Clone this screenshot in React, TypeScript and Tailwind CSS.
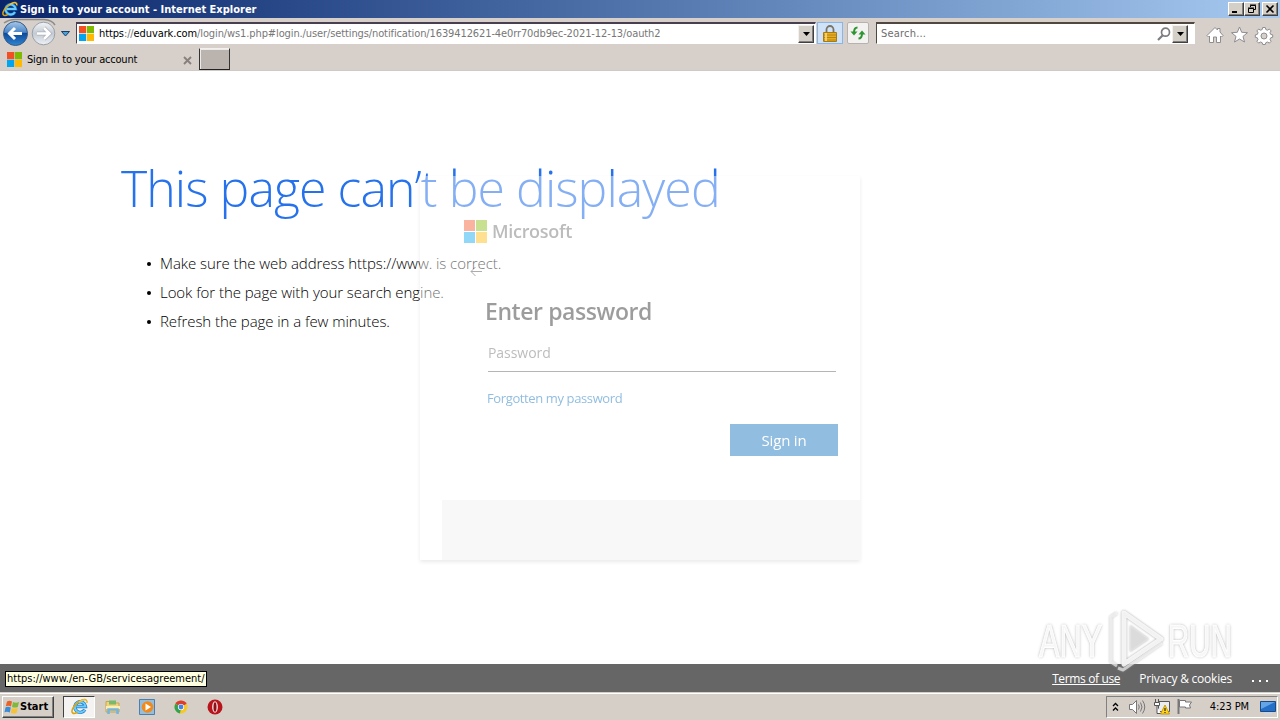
import type { ReactNode } from "react";

const WindowsLogo = ({ size }: { size: number }) => (
  <svg width={size} height={size} viewBox="0 0 23 23" className="shrink-0">
    <path fill="#f25022" d="M0 0h11v11H0z" />
    <path fill="#7fba00" d="M12 0h11v11H12z" />
    <path fill="#00a4ef" d="M0 12h11v11H0z" />
    <path fill="#ffb900" d="M12 12h11v11H12z" />
  </svg>
);

const IeLogo = ({ size }: { size: number }) => (
  <svg width={size} height={size} viewBox="0 0 16 16" className="shrink-0" fill="none">
    <path d="M13 11a5 5 0 1 1 .6-3H5" stroke="#1677c8" strokeWidth="3.2" />
    <path d="M13 11a5 5 0 1 1 .6-3H5" stroke="#6ccbf8" strokeWidth="1.9" />
    <path d="M14.8 4.500C15.500 1 12 .5 7.500 3.500 3 6.500-.5 12 1.500 14c1 1 3 .4 4.500-.6" stroke="#d9a514" strokeWidth="1.500" />
    <path d="M14.500 4C14.800 1.300 12 .8 7.500 3.800" stroke="#ffe36b" strokeWidth=".7" />
  </svg>
);

const Caret = () => (
  <svg width="7" height="4" viewBox="0 0 7 4">
    <path d="M0 0h7L3.500 4z" fill="#000" />
  </svg>
);

const DropButton = () => (
  <div className="flex h-[18px] w-4 items-center justify-center border border-t-[#f4f1ec] border-r-[#404040] border-b-[#404040] border-l-[#f4f1ec] bg-[#d4d0c8] shadow-[inset_-1px_-1px_#808080]">
    <Caret />
  </div>
);

const WinButton = ({ children }: { children: ReactNode }) => (
  <div className="flex h-[14px] w-4 items-center justify-center border border-t-white border-r-[#404040] border-b-[#404040] border-l-white bg-[#d4d0c8] shadow-[inset_-1px_-1px_#808080]">
    <svg width="12" height="10" viewBox="0 0 12 10" fill="none" stroke="#000">
      {children}
    </svg>
  </div>
);

const TitleBar = () => (
  <div className="flex h-[18px] items-center bg-linear-to-r from-[#0a246a] to-[#a6caf0] pr-[2px] pl-[2px]">
    <IeLogo size={16} />
    <span className="ml-[2px] pt-[2px] font-['DejaVu_Sans_Condensed','DejaVu_Sans',sans-serif] text-[11px] font-bold whitespace-nowrap text-white">
      Sign in to your account - Internet Explorer
    </span>
    <div className="ml-auto flex">
      <WinButton>
        <path d="M2 8h5" strokeWidth="2" />
      </WinButton>
      <WinButton>
        <path d="M4.500 3V1.500h5v4H8M4 1h6M2.500 4.500h5v4h-5zM2 4h6" />
      </WinButton>
      <div className="ml-[2px]">
        <WinButton>
          <path d="M2.500 1.500l7 7M9.500 1.500l-7 7" strokeWidth="1.600" />
        </WinButton>
      </div>
    </div>
  </div>
);

const NavButtons = () => (
  <svg width="76" height="30" viewBox="0 0 76 30" className="shrink-0">
    <defs>
      <linearGradient id="back" x1="0" y1="0" x2="0" y2="1">
        <stop offset="0" stopColor="#a9c8e8" />
        <stop offset=".45" stopColor="#4a86c8" />
        <stop offset=".5" stopColor="#0d4a9c" />
        <stop offset="1" stopColor="#2f86d0" />
      </linearGradient>
      <linearGradient id="fwd" x1="0" y1="0" x2="0" y2="1">
        <stop offset="0" stopColor="#f3f5f7" />
        <stop offset=".5" stopColor="#c3cad3" />
        <stop offset="1" stopColor="#eef2f6" />
      </linearGradient>
    </defs>
    <path d="M4 5Q9 1.500 15 1.500h29Q52 2 55 7" fill="none" stroke="#8e8c8a" strokeWidth="1.500" />
    <circle cx="15.500" cy="15.500" r="12" fill="url(#back)" stroke="#375a86" />
    <circle cx="43.500" cy="15.500" r="11.300" fill="url(#fwd)" stroke="#98a0aa" />
    <path d="M22 15.500H10M15 10l-5.500 5.500L15 21" fill="none" stroke="#fff" strokeWidth="3" />
    <path d="M37 15.500h12M44 10l5.500 5.500L44 21" fill="none" stroke="#aab0b8" strokeWidth="4" />
    <path d="M37 15.500h12M44 10l5.500 5.500L44 21" fill="none" stroke="#fff" strokeWidth="2.600" />
    <path d="M61.500 13.500h8l-4 4.500z" fill="#4aa3d8" stroke="#173f6c" />
  </svg>
);

const AddressBar = () => (
  <div className="flex h-[30px] items-start bg-[#d6cfca]">
    <NavButtons />
    <div className="mt-[4px] flex h-[22px] w-[740px] shrink-0 items-center border border-t-2 border-t-[#484050] border-r-white border-b-white border-l-[#484050] bg-white pl-[2px]">
      <WindowsLogo size={15} />
      <span className="ml-[5px] pt-[2px] font-['DejaVu_Sans_Condensed','DejaVu_Sans',sans-serif] text-[11px] tracking-[-0.11px] whitespace-nowrap text-[#777]">
        <span className="text-black">https</span>://<span className="text-black">eduvark.com</span>
        /login/ws1.php#login./user/settings/notification/1639412621-4e0rr70db9ec-2021-12-13/oauth2
      </span>
      <div className="ml-auto pr-px">
        <DropButton />
      </div>
    </div>
    <div className="mt-[4px] ml-[1px] flex h-[22px] w-[26px] shrink-0 items-center justify-center border border-[#8ab6e6] bg-[#cfe2f8]">
      <svg width="14" height="17" viewBox="0 0 14 17">
        <path d="M3.500 8V4.500a3.500 3.500 0 0 1 7 0V8" fill="none" stroke="#7b7464" strokeWidth="1.800" />
        <path d="M.5 7.500h13v9H.5z" fill="#e8ad1e" stroke="#a87a10" />
        <path d="M1 10h12M1 12.500h12M1 15h12" stroke="#b88411" />
        <path d="M3 8v8" stroke="#fbe08a" strokeWidth="1.500" />
      </svg>
    </div>
    <div className="mt-[4px] ml-[4px] flex h-[22px] w-[22px] shrink-0 items-center justify-center rounded-[2px] border border-[#b5b2b0] bg-[#f3f2f1]">
      <svg width="16" height="14" viewBox="0 0 16 14" fill="none" stroke="#2d9632" strokeWidth="2">
        <path d="M7.500 1.500C5 1.500 4 3 4 6.500" />
        <path d="M.5 5.500h7L4 9.500z" fill="#2d9632" stroke="none" />
        <path d="M8.500 12.500c2.500 0 3.500-1.500 3.500-5" />
        <path d="M8.500 8.500h7L12 4.500z" fill="#2d9632" stroke="none" />
      </svg>
    </div>
    <div className="mt-[4px] ml-[7px] flex h-[22px] w-[319px] shrink-0 items-center border border-t-2 border-t-[#504840] border-r-white border-b-white border-l-[#504840] bg-white pr-[6px] pl-[4px]">
      <span className="pt-[2px] font-['DejaVu_Sans_Condensed','DejaVu_Sans',sans-serif] text-[11px] tracking-[0.2px] text-[#6d6d6d]">
        Search...
      </span>
      <svg width="14" height="14" viewBox="0 0 14 14" fill="none" stroke="#7b7b80" className="mr-px ml-auto">
        <circle cx="8.500" cy="5.200" r="4" strokeWidth="1.700" />
        <path d="M5.500 8.500L1 13" strokeWidth="2.200" />
      </svg>
      <DropButton />
    </div>
    <svg width="70" height="20" viewBox="0 0 70 20" className="mt-[7px] ml-[11px] shrink-0" fill="#fff" stroke="#8f8d90">
      <path d="M1 10.500L9 2.500l2.500 2.500V3.500h2.500V7l3 3.500-1.500 1.500-1-1V17.500h-4V12H7.500v5.500h-4V11l-1 1z" />
      <path d="M33.500 2l2.200 5.300 5.800.4-4.500 3.700 1.500 5.600-5-3-5 3 1.500-5.600-4.500-3.700 5.800-.4z" />
      <path d="M56.700 2.500h2.600l.5 2 1.700.7 1.800-1.100 1.800 1.800-1.100 1.800.7 1.700 2 .5v2.400l-2 .5-.7 1.700 1.100 1.800-1.800 1.800-1.800-1.100-1.700.7-.5 1.800h-2.600l-.5-1.800-1.700-.7-1.800 1.100-1.800-1.800L52 14.500l-.7-1.700-2-.5V9.900l2-.5.700-1.700-1.100-1.800 1.800-1.800 1.800 1.100 1.700-.7z" />
      <circle cx="58" cy="11" r="3" fill="#d6cfca" />
    </svg>
  </div>
);

const Tabs = () => (
  <div className="flex h-[23px] border-b border-[#d0c9c4] bg-[#d6cfca]">
    <div className="flex w-[199px] items-center pl-[7px]">
      <WindowsLogo size={15} />
      <span className="ml-[5px] pt-[3px] font-['DejaVu_Sans_Condensed','DejaVu_Sans',sans-serif] text-[11px] tracking-[-0.2px] whitespace-nowrap text-black">
        Sign in to your account
      </span>
      <svg width="9" height="9" viewBox="0 0 9 9" className="mt-[2px] mr-[7px] ml-auto" stroke="#88807c" strokeWidth="1.900">
        <path d="M1 1l7 7M8 1L1 8" />
      </svg>
    </div>
    <div className="h-[22px] w-[31px] border border-t-[#f3f0ee] border-r-[#333] border-b-[#222] border-l-[#333] bg-[#bab3ae] shadow-[inset_1px_1px_#eeeae7]" />
  </div>
);

const tips = [
  "Make sure the web address https://www. is correct.",
  "Look for the page with your search engine.",
  "Refresh the page in a few minutes.",
];

const ErrorMessage = () => (
  <div className="pt-[83px] pl-[121px] font-['Open_Sans',sans-serif] font-light">
    <h1 className="h-[68px] text-[50px] leading-[68px] tracking-[-0.94px] whitespace-nowrap text-[#2672ec]">
      This page can’t be displayed
    </h1>
    <ul className="mt-[27px] text-[15px] leading-[29px] tracking-[-0.06px] text-black">
      {tips.map((tip) => (
        <li key={tip} className="flex items-center pl-[26px]">
          <span className="mr-[9px] size-1 rounded-full bg-black" />
          <span className="whitespace-nowrap">{tip}</span>
        </li>
      ))}
    </ul>
  </div>
);

// Sign-in card fading in over the error page
const SignInCard = () => (
  <div className="absolute top-[105px] left-[420px] flex h-[384px] w-[440px] flex-col bg-white font-['Open_Sans',sans-serif] text-[#1b1b1b] opacity-[.43] shadow-[0_2px_4px_rgba(0,0,0,0.2)]">
    <div className="mt-[44px] ml-[44px] flex h-[23px] items-center">
      <WindowsLogo size={23} />
      <span className="ml-[5px] text-[18px] font-semibold tracking-[-0.3px] text-[#666]">Microsoft</span>
    </div>
    <svg width="12" height="12" viewBox="0 0 12 12" className="mt-[22px] ml-[50px] shrink-0" fill="none" stroke="#404040">
      <path d="M12 6.500H1M5.500 2L1 6.500 5.500 11" />
    </svg>
    <h2 className="mt-[17px] ml-[65px] text-[23px] leading-[34px] font-semibold tracking-[-0.42px]">Enter password</h2>
    <div className="mt-[7px] ml-[68px] h-[37px] w-[348px] border-b border-[#555] text-[14px] leading-[35px] tracking-[-0.05px] text-[#666]">
      Password
    </div>
    <a className="mt-[16px] ml-[67px] text-[13px] leading-[20px] tracking-[-0.38px] text-[#0067b8]">
      Forgotten my password
    </a>
    <button className="mt-[16px] ml-[310px] h-[32px] w-[108px] shrink-0 bg-[#0067b8] pt-px text-[15px] leading-[31px] tracking-[-0.2px] text-white">
      Sign in
    </button>
    <div className="mt-auto ml-[22px] h-[60px] bg-[#f0f0f0]" />
  </div>
);

const PageFooter = () => (
  <div className="flex h-[28px] items-center justify-between bg-[#666] pr-[11px] pl-[5px]">
    <div className="mt-[2px] h-[16px] w-[202px] border border-black bg-[#ffffe1] pl-px font-['DejaVu_Sans_Condensed','DejaVu_Sans',sans-serif] text-[11px] leading-[14px] whitespace-nowrap text-black">
      https://www./en-GB/servicesagreement/
    </div>
    <div className="flex items-center pt-[2px] font-['Open_Sans',sans-serif] text-[12px] text-white">
      <span className="tracking-[-0.36px] underline">Terms of use</span>
      <span className="ml-[19px] tracking-[-0.22px]">Privacy &amp; cookies</span>
      <svg width="18" height="4" viewBox="0 0 18 4" className="mt-[4px] ml-[19px]" fill="#fff">
        <path d="M1 1h2v2H1zM8 1h2v2H8zM15 1h2v2h-2z" />
      </svg>
    </div>
  </div>
);

const Watermark = () => (
  <div className="absolute top-[608px] left-[1039px] flex h-[66px] w-[200px] items-center font-['Liberation_Sans',sans-serif] text-[46px] leading-none font-normal text-white/90 [-webkit-text-stroke:1.2px_#fff] [text-shadow:0_0_2px_#aaa,0_0_4px_#bbb]">
    <span className="w-[67px] origin-left scale-x-[.67] whitespace-nowrap">ANY</span>
    <svg width="62" height="66" viewBox="0 0 62 66" fill="none" className="shrink-0 drop-shadow-[0_0_1px_#999]" strokeLinejoin="round">
      <path d="M18 5l37 26-37 25z" stroke="#fff" strokeOpacity=".85" strokeWidth="5" />
      <path d="M24 17l19 14-19 13z" fill="#e9e9e9" fillOpacity=".7" />
      <path d="M11 5L5 9v45l6 4M12 60l5 2 39-27" stroke="#fff" strokeOpacity=".6" strokeWidth="3" />
    </svg>
    <span className="origin-left scale-x-[.64] whitespace-nowrap">RUN</span>
  </div>
);

const Taskbar = () => (
  <div className="flex h-[28px] items-center border-t border-[#d4d0c8] bg-[#d6cfc8] pr-[2px] pl-[2px] shadow-[inset_0_1px_#fff]">
    <div className="flex h-[22px] w-[52px] items-center border border-t-white border-r-[#404040] border-b-[#404040] border-l-white pl-px shadow-[inset_-1px_-1px_#808080]">
      <svg width="16" height="16" viewBox="0 0 16 16" className="shrink-0">
        <path d="M3 2.500Q5.500 1 8 2.500L7 7.500Q4.500 6 1.800 7.200z" fill="#e8622a" />
        <path d="M9 3q3 1.400 6 0l-1.200 5Q11 9.200 8 8z" fill="#7fb83a" />
        <path d="M1.600 8.200Q4.200 7 6.800 8.500l-1 5Q3 12 .5 13.200z" fill="#3b8bd6" />
        <path d="M7.800 9q3 1.200 6 0l-1.300 5q-3 1.200-5.700-.2z" fill="#f6c334" />
      </svg>
      <span className="pt-[2px] font-['DejaVu_Sans_Condensed','DejaVu_Sans',sans-serif] text-[11px] font-bold text-black">
        Start
      </span>
    </div>
    <div className="ml-[9px] flex h-[22px] w-[32px] items-center justify-center border border-t-[#404040] border-r-white border-b-white border-l-[#404040] bg-[#f5f3f1]">
      <IeLogo size={17} />
    </div>
    <svg width="16" height="16" viewBox="0 0 16 16" className="ml-[10px]">
      <path d="M1 2.500h5l1 1.500h7v9H1z" fill="#efd27a" stroke="#c9a44a" />
      <path d="M4 1.500h7v4H4z" fill="#78b96b" />
      <path d="M1 7h14v3H1z" fill="#fbeeb5" />
      <path d="M3.500 15v-4.500h9V15" fill="none" stroke="#75b4de" strokeWidth="2.500" />
    </svg>
    <svg width="16" height="16" viewBox="0 0 16 16" className="ml-[18px]">
      <path d="M.5.5h15v15H.5z" fill="#94bede" stroke="#4c7fae" />
      <circle cx="8.500" cy="8" r="5.800" fill="#f28a1b" />
      <path d="M6.500 4.500l5.500 3.500-5.500 3.500z" fill="#fff" />
    </svg>
    <svg width="14" height="14" viewBox="0 0 14 14" className="ml-[19px]">
      <circle cx="7" cy="7" r="6.500" fill="#f7c927" />
      <path d="M7 7L1.400 3.700A6.500 6.500 0 0 1 12.600 3.700z" fill="#dc3d32" />
      <path d="M7 7L1.400 3.700A6.500 6.500 0 0 0 6 13.500z" fill="#35a251" />
      <circle cx="7" cy="7" r="3.100" fill="#fff" />
      <circle cx="7" cy="7" r="2.400" fill="#4285e8" />
    </svg>
    <svg width="16" height="16" viewBox="0 0 16 16" className="ml-[19px]">
      <circle cx="8" cy="8" r="7.500" fill="#b8141c" />
      <ellipse cx="8" cy="8" rx="2.900" ry="5.800" fill="#f4dddd" />
      <ellipse cx="8" cy="8" rx="1.500" ry="4.700" fill="#8f1018" />
    </svg>
    <div className="ml-auto flex h-[22px] w-[172px] items-center border border-t-[#808080] border-r-white border-b-white border-l-[#808080] pr-px">
      <svg width="7" height="10" viewBox="0 0 7 10" className="ml-[5px]" fill="none" stroke="#000" strokeWidth="1.300">
        <path d="M1 4l2.500-2.500L6 4M1 8.500L3.500 6 6 8.500" />
      </svg>
      <svg width="17" height="16" viewBox="0 0 17 16" className="ml-[10px]" fill="none" stroke="#77767a">
        <path d="M.5 5.500h3l4-4v13l-4-4h-3z" fill="#fff" />
        <path d="M9.500 5.500q1.500 2.500 0 5M11.500 3.500q3 4.500 0 9M13.500 1.500q4.500 6.500 0 13" />
      </svg>
      <svg width="16" height="16" viewBox="0 0 16 16" className="ml-[8px]" fill="none" stroke="#555">
        <path d="M4.500 2.500h11v10h-11z" fill="#e9edf0" />
        <path d="M1.500 0v3M4.500 0v3M.5 3.500h5v3h-5zM3 7v7.500h4" fill="#fff" />
        <path d="M11 6l4.500 9h-9z" fill="#ffd51c" stroke="#b98c00" strokeWidth=".8" />
        <path d="M11 9v3M11 13v1" stroke="#000" />
      </svg>
      <svg width="16" height="15" viewBox="0 0 16 15" className="ml-[7px]" fill="#fff" stroke="#77767a">
        <path d="M1.500 0v15" strokeWidth="2" />
        <path d="M2.500 1.500h6v1.500h6l-2 3 1 3h-5V8h-6z" />
      </svg>
      <span className="ml-auto pt-[2px] font-['DejaVu_Sans_Condensed','DejaVu_Sans',sans-serif] text-[11px] tracking-[-0.1px] whitespace-nowrap text-black">
        4:23 PM
      </span>
      <svg width="16" height="14" viewBox="0 0 16 14" className="mt-[2px] ml-[11px]">
        <path d="M.5.500h15v10H.5z" fill="#2470c8" stroke="#194a88" />
        <path d="M1 1h14L1 8z" fill="#64a5e8" />
        <path d="M4 12.500h8" stroke="#c9d6e2" strokeWidth="2" />
      </svg>
    </div>
  </div>
);

const App = () => {
  return (
    <div className="relative flex h-[720px] w-[1280px] flex-col overflow-hidden bg-white">
      <TitleBar />
      <AddressBar />
      <Tabs />
      <div className="relative flex min-h-0 flex-1 flex-col bg-white">
        <div className="min-h-0 flex-1">
          <ErrorMessage />
        </div>
        <SignInCard />
        <PageFooter />
      </div>
      <Taskbar />
      <Watermark />
    </div>
  );
};

export default App;
